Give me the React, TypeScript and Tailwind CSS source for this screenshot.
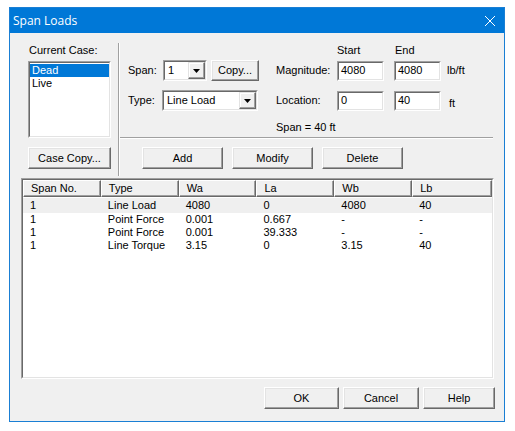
import React from 'react';

const font = { fontFamily: '"Liberation Sans", Arial, sans-serif' };

function Btn({ label, w, h = 22 }: { label: string; w: number; h?: number }) {
  return (
    <div
      className="flex items-center justify-center bg-[#f0f0f0] border border-t-white border-l-white border-r-[#696969] border-b-[#696969] shadow-[inset_-1px_-1px_0_#a0a0a0,inset_1px_1px_0_#e3e3e3] text-[11px] text-black"
      style={{ width: w, height: h }}
    >
      {label}
    </div>
  );
}

function Sunken({ className, children }: { className: string; children?: React.ReactNode }) {
  return (
    <div className={'border border-t-[#a0a0a0] border-l-[#a0a0a0] border-r-white border-b-white ' + className}>
      <div className="w-full h-full border border-t-[#696969] border-l-[#696969] border-r-[#e3e3e3] border-b-[#e3e3e3] bg-white">
        {children}
      </div>
    </div>
  );
}

function Arrow() {
  return (
    <div className="w-[17px] h-full flex items-center justify-center bg-[#f0f0f0] border border-t-[#e3e3e3] border-l-[#e3e3e3] border-r-[#696969] border-b-[#696969] shadow-[inset_-1px_-1px_0_#a0a0a0,inset_1px_1px_0_#ffffff]">
      <svg width="7" height="4" viewBox="0 0 7 4">
        <path d="M0 0h7L3.5 4z" fill="#000" />
      </svg>
    </div>
  );
}

function Combo({ value, w }: { value: string; w: number }) {
  return (
    <div style={{ width: w }}>
      <Sunken className="h-[21px] w-full">
        <div className="flex h-full">
          <div className="flex-1 pl-[3px] flex items-center text-[11px]">{value}</div>
          <Arrow />
        </div>
      </Sunken>
    </div>
  );
}

function Field({ value }: { value: string }) {
  return (
    <Sunken className="w-[47px] h-[20px]">
      <div className="pl-[2px] h-full flex items-center text-[11px]">{value}</div>
    </Sunken>
  );
}

const cols = ['Span No.', 'Type', 'Wa', 'La', 'Wb', 'Lb'];
const rows = [
  ['1', 'Line Load', '4080', '0', '4080', '40'],
  ['1', 'Point Force', '0.001', '0.667', '-', '-'],
  ['1', 'Point Force', '0.001', '39.333', '-', '-'],
  ['1', 'Line Torque', '3.15', '0', '3.15', '40'],
];

export default function App() {
  return (
    <div className="w-[515px] h-[431px] bg-white pt-[7px] pl-[9px] text-black" style={font}>
      <div className="w-[496px] h-[415px] border border-[#1a7fd4] flex flex-col bg-[#f0f0f0]">
        {/* Title bar */}
        <div className="h-[25px] bg-[#0078d7] flex items-center justify-between pl-[3px] pr-[9px]">
          <span className="text-white text-[12px]" style={{ fontFamily: '"Open Sans", "Liberation Sans", sans-serif' }}>
            Span Loads
          </span>
          <svg width="10" height="10" viewBox="0 0 10 10">
            <path d="M0 0L10 10M10 0L0 10" stroke="#fff" strokeWidth="1" />
          </svg>
        </div>

        <div className="flex-1 flex flex-col pt-[10px]">
          {/* Top section */}
          <div className="flex h-[133px]">
            {/* Left column */}
            <div className="ml-[18px] w-[83px] flex flex-col">
              <div className="h-[14px] flex items-center pl-[1px] text-[11px]">Current Case:</div>
              <Sunken className="mt-[4px] h-[77px] w-full">
                <div className="pt-[1px]">
                  <div className="h-[13px] bg-[#0078d7] text-white text-[11px] pl-[2px] flex items-center">Dead</div>
                  <div className="h-[13px] text-[11px] pl-[2px] flex items-center">Live</div>
                </div>
              </Sunken>
              <div className="mt-[9px]">
                <Btn label="Case Copy..." w={83} />
              </div>
            </div>

            {/* Vertical separator */}
            <div className="ml-[7px] flex">
              <div className="w-px bg-[#a0a0a0]" />
              <div className="w-px bg-white" />
            </div>

            {/* Right part */}
            <div className="w-[373px] flex flex-col text-[11px]">
              <div className="h-[14px] flex items-center pl-[217px]">
                <span className="w-[58px]">Start</span>
                <span>End</span>
              </div>
              <div className="mt-[3px] h-[21px] flex items-center pl-[8px]">
                <span className="w-[35px]">Span:</span>
                <Combo value="1" w={44} />
                <div className="ml-[4px] -mt-[1px]">
                  <Btn label="Copy..." w={48} h={21} />
                </div>
                <span className="ml-[17px] w-[61px]">Magnitude:</span>
                <Field value="4080" />
                <div className="ml-[10px]">
                  <Field value="4080" />
                </div>
                <span className="ml-[6px]">lb/ft</span>
              </div>
              <div className="mt-[9px] h-[21px] flex items-center pl-[8px]">
                <span className="w-[34px]">Type:</span>
                <Combo value="Line Load" w={96} />
                <span className="ml-[18px] w-[61px]">Location:</span>
                <Field value="0" />
                <div className="ml-[10px]">
                  <Field value="40" />
                </div>
                <span className="ml-[8px] mt-[6px]">ft</span>
              </div>
              <div className="mt-[9px] h-[14px] flex items-center pl-[156px]">Span = 40 ft</div>
              <div className="mt-[3px] flex flex-col">
                <div className="h-px bg-[#a0a0a0]" />
                <div className="h-px bg-white" />
              </div>
              <div className="mt-[8px] flex pl-[22px] gap-[9px]">
                <Btn label="Add" w={81} />
                <Btn label="Modify" w={81} />
                <Btn label="Delete" w={81} />
              </div>
            </div>
          </div>

          {/* List view */}
          <Sunken className="mt-[2px] ml-[11px] w-[473px] h-[201px]">
            <div className="flex h-[17px] bg-[#f0f0f0]">
              {cols.map((c, i) => (
                <div
                  key={c}
                  className={
                    'h-full flex items-center pl-[7px] text-[11px] bg-[#f0f0f0] border border-t-white border-l-white border-r-[#696969] border-b-[#696969] shadow-[inset_-1px_-1px_0_#a0a0a0] ' +
                    (i === 5 ? 'w-[80px]' : 'w-[78px]')
                  }
                >
                  {c}
                </div>
              ))}
            </div>
            <div className="pt-[1px]">
              {rows.map((r, ri) => (
                <div key={ri} className={'flex h-[13px] items-center ' + (ri === 0 ? 'bg-[#efefef] h-[15px]' : '')}>
                  {r.map((v, i) => (
                    <div key={i} className={'pl-[7px] text-[11px] ' + (i === 5 ? 'w-[80px]' : 'w-[78px]')}>
                      {v}
                    </div>
                  ))}
                </div>
              ))}
            </div>
          </Sunken>

          {/* Bottom buttons */}
          <div className="mt-[8px] flex justify-end pr-[9px] gap-[4px]">
            <Btn label="OK" w={75} />
            <Btn label="Cancel" w={76} />
            <Btn label="Help" w={72} />
          </div>
        </div>
      </div>
    </div>
  );
}
